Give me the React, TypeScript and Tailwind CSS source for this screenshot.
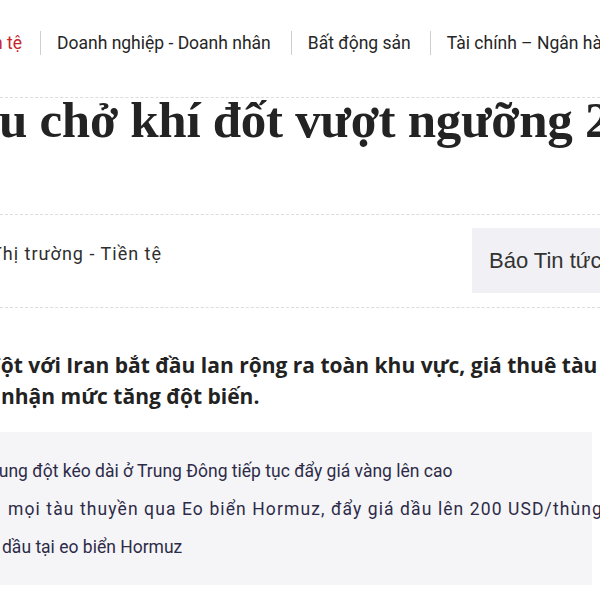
export default function App() {
  const sans = { fontFamily: "Roboto, 'Noto Sans', sans-serif" };
  return (
    <div className="w-[600px] h-[600px] overflow-hidden bg-white text-[#222]" style={sans}>
      {/* nav */}
      <div className="h-[98px] border-b border-dashed border-[#dcdcdc] pt-[30px]">
        <div className="flex items-center h-[26px] whitespace-nowrap text-[17.5px] text-[#262626]">
          <div className="w-[22px] flex justify-end">
            <span className="text-[#c3262e] whitespace-nowrap">Tiền tệ</span>
          </div>
          <span className="w-px h-[24px] bg-[#cfcfcf] ml-[18px] mr-[16px] shrink-0" />
          <span>Doanh nghiệp - Doanh nhân</span>
          <span className="w-px h-[24px] bg-[#cfcfcf] ml-[20px] mr-[16px] shrink-0" />
          <span>Bất động sản</span>
          <span className="w-px h-[24px] bg-[#cfcfcf] ml-[19px] mr-[16px] shrink-0" />
          <span>Tài chính – Ngân hàng</span>
        </div>
      </div>
      {/* title */}
      <div className="h-[117px] border-b border-dashed border-[#dcdcdc] whitespace-nowrap">
        <div
          className="text-[51px] leading-[44px] font-bold text-[#232323] -ml-[1px] tracking-[-0.3px]"
          style={{ fontFamily: "'Liberation Serif', 'DejaVu Serif', serif" }}
        >
          u chở khí đốt vượt ngưỡng 200
        </div>
      </div>
      {/* meta row */}
      <div className="h-[93px] border-b border-dashed border-[#dcdcdc] flex items-start justify-between">
        <div className="pt-[25px] text-[18px] tracking-[1px] text-[#2e2e2e] whitespace-nowrap -ml-[9px]">Thị trường - Tiền tệ</div>
        <div
          className="mt-[13px] h-[65px] w-[128px] bg-[#f1f1f5] pl-[17px] flex items-center text-[22px] text-[#333] whitespace-nowrap overflow-hidden"
          style={{ fontFamily: "'Liberation Sans', Arial, sans-serif" }}
        >
          Báo Tin tức
        </div>
      </div>
      {/* lead */}
      <div
        className="pt-[42px] text-[21px] leading-[31px] font-bold text-[#222] whitespace-nowrap"
        style={{ fontFamily: "'Open Sans', Roboto, sans-serif" }}
      >
        <div className="-ml-[13px]">đột với Iran bắt đầu lan rộng ra toàn khu vực, giá thuê tàu</div>
        <div className="ml-[1px]">nhận mức tăng đột biến.</div>
      </div>
      {/* related box */}
      <div className="mt-[20px] w-[592px] h-[153px] bg-[#f5f5f7] pt-[20px] text-[17.5px] leading-[38px] text-[#2d2b48] whitespace-nowrap">
        <div className="-ml-[12px]">Xung đột kéo dài ở Trung Đông tiếp tục đẩy giá vàng lên cao</div>
        <div className="ml-[8px] tracking-[1.1px]">mọi tàu thuyền qua Eo biển Hormuz, đẩy giá dầu lên 200 USD/thùng</div>
        <div className="ml-[2px]">dầu tại eo biển Hormuz</div>
      </div>
    </div>
  );
}
